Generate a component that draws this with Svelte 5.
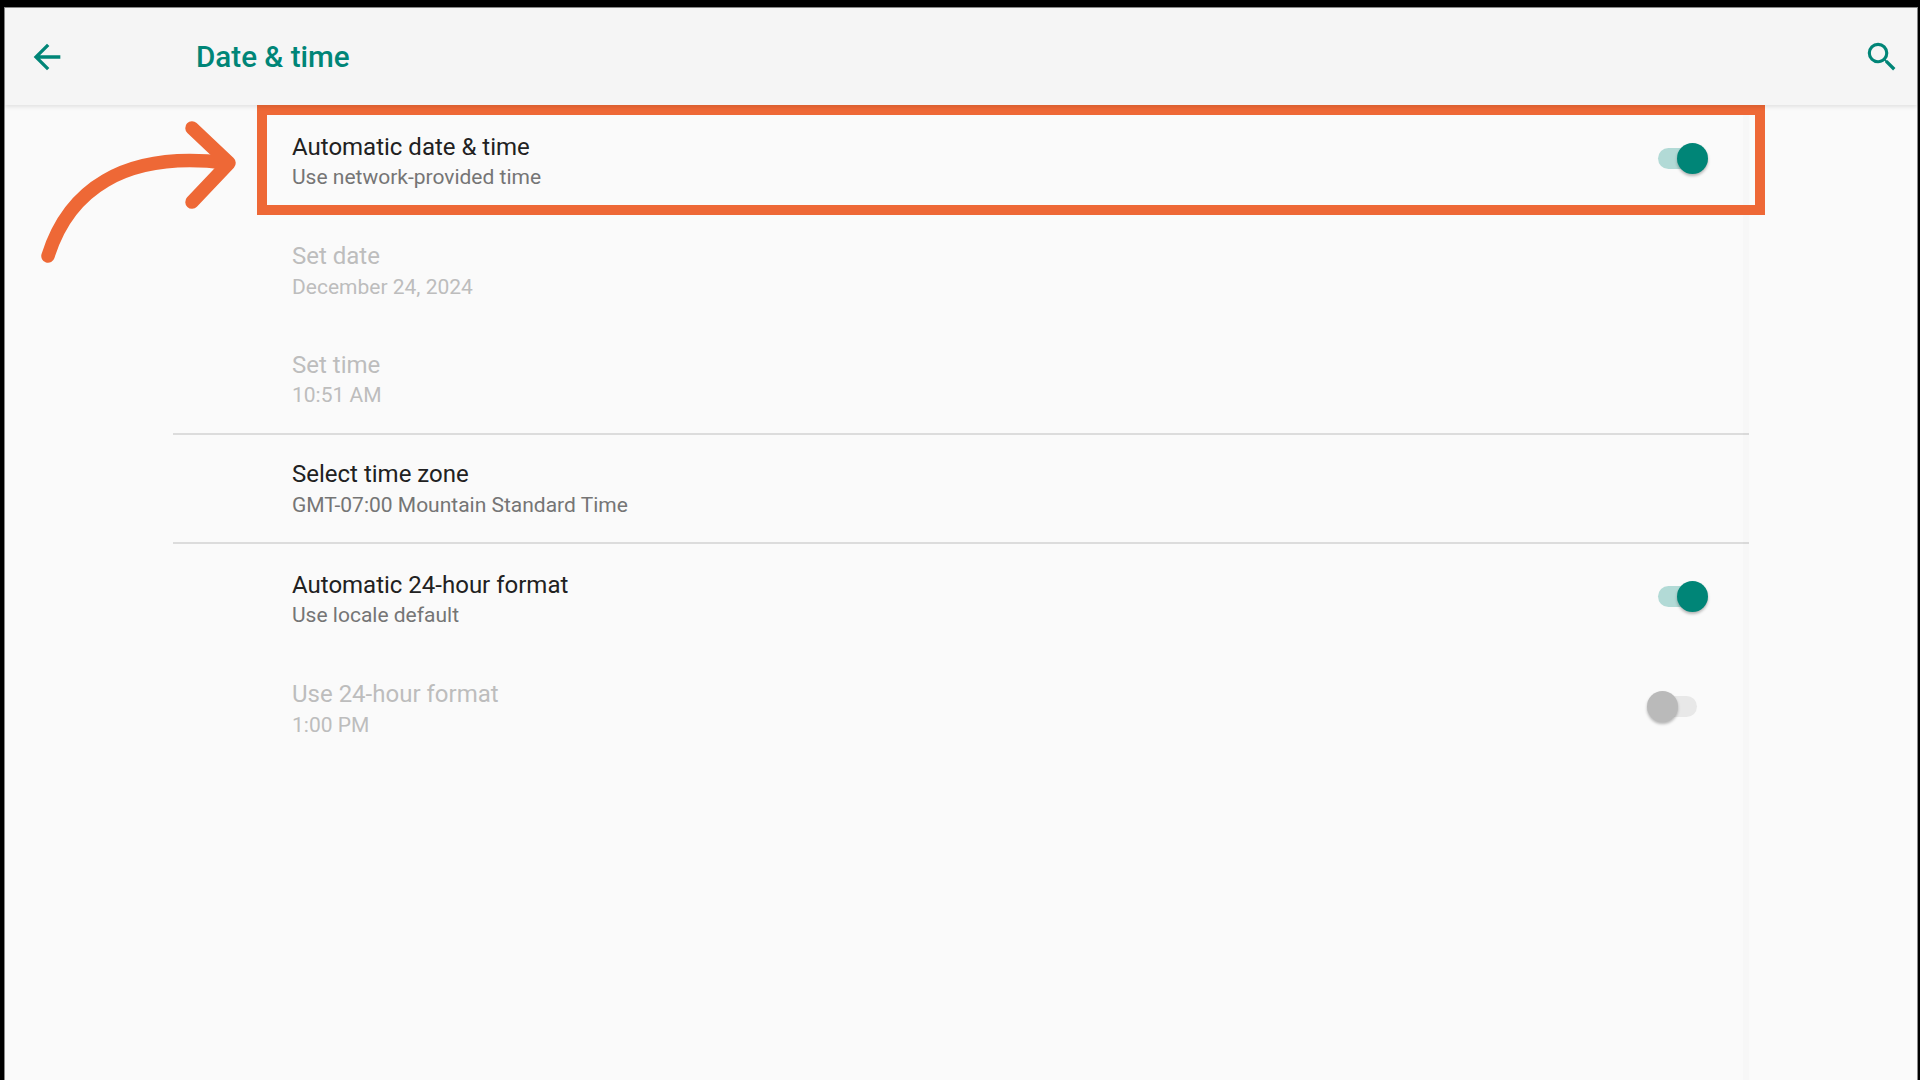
<script lang="ts">
	// Android "Date & time" settings page, with the tutorial arrow + highlight on top.
	interface Row {
		title: string;
		summary: string;
		disabled?: boolean;
		toggle?: 'on' | 'off';
		divider?: boolean;
	}

	const rows: Row[] = [
		{ title: 'Automatic date & time', summary: 'Use network-provided time', toggle: 'on' },
		{ title: 'Set date', summary: 'December 24, 2024', disabled: true },
		{ title: 'Set time', summary: '10:51 AM', disabled: true, divider: true },
		{ title: 'Select time zone', summary: 'GMT-07:00 Mountain Standard Time', divider: true },
		{ title: 'Automatic 24-hour format', summary: 'Use locale default', toggle: 'on' },
		{ title: 'Use 24-hour format', summary: '1:00 PM', disabled: true, toggle: 'off' }
	];
</script>

<div class="frame">
	<main class="screen">
		<header class="appbar">
			<svg class="icon" viewBox="0 0 24 24" width="40" height="40" aria-hidden="true">
				<path d="M20 11H7.83l5.59-5.59L12 4l-8 8 8 8 1.41-1.41L7.83 13H20v-2z" />
			</svg>
			<h1 class="appbar__title">Date &amp; time</h1>
			<svg class="icon" viewBox="0 0 24 24" width="38" height="38" aria-hidden="true">
				<path d="M15.5 14h-.79l-.28-.27A6.47 6.47 0 0 0 16 9.5 6.5 6.5 0 1 0 9.5 16c1.61 0 3.09-.59 4.23-1.57l.27.28v.79l5 4.99L20.49 19l-4.99-5zm-6 0C7.01 14 5 11.99 5 9.5S7.01 5 9.5 5 14 7.01 14 9.5 11.99 14 9.5 14z" />
			</svg>
		</header>

		<ul class="list">
			{#each rows as row (row.title)}
				<li class="row" class:row--disabled={row.disabled} class:row--divider={row.divider}>
					<div class="row__text">
						<span class="row__title">{row.title}</span>
						<span class="row__summary">{row.summary}</span>
					</div>
					{#if row.toggle}
						<span class="toggle toggle--{row.toggle}">
							<span class="toggle__track"></span>
							<span class="toggle__thumb"></span>
						</span>
					{/if}
				</li>
			{/each}
		</ul>
	</main>

	<div class="highlight"></div>
	<svg class="arrow" viewBox="0 0 260 280" width="260" height="280" aria-hidden="true">
		<path d="M48 256C68 192 122 150 226 163" />
		<path d="M192 128L229 163L192 202" />
	</svg>
</div>

<style>
	:global(body) {
		background: #000;
	}

	.frame {
		position: relative;
		width: 1920px;
		height: 1080px;
		box-sizing: border-box;
		padding: 8px 3px 0 5px;
		background: #000;
		overflow: hidden;
		font-family: Roboto, sans-serif;
	}

	.screen {
		display: flex;
		flex-direction: column;
		height: 100%;
		background: #fafafa;
		box-shadow: 0 0 0 1px #8a8a8a;
	}

	.appbar {
		display: flex;
		flex: none;
		align-items: center;
		height: 97px;
		padding: 0 16px 0 22px;
		background: #f5f5f5;
		box-shadow: 0 2px 4px rgba(0, 0, 0, 0.1);
		position: relative;
		z-index: 1;
	}

	.icon {
		fill: #008577;
		flex: none;
	}

	.appbar__title {
		margin: 0 0 0 129px;
		font-size: 29.6px;
		font-weight: 500;
		color: #008577;
		flex: 1;
	}

	.list {
		position: relative;
		flex: 1;
		list-style: none;
		margin: 0 0 0 168px;
		padding: 1px 0 0;
		width: 1576px;
	}

	/* faint scroll indicator column at the list's right edge */
	.list::after {
		content: '';
		position: absolute;
		top: 0;
		right: 0;
		bottom: 0;
		width: 6px;
		background: rgba(0, 0, 0, 0.01);
	}

	.row {
		display: flex;
		align-items: center;
		justify-content: space-between;
		box-sizing: border-box;
		height: 109.6px;
		padding: 0 41px 0 119px;
	}

	.row--divider {
		border-bottom: 2px solid #dcdcdc;
	}

	.row__text {
		display: flex;
		flex-direction: column;
		gap: 3.6px;
		padding-top: 1px;
	}

	.row__title {
		font-size: 24px;
		line-height: 28px;
		color: #212121;
	}

	.row__summary {
		font-size: 21px;
		line-height: 26px;
		color: #757575;
	}

	.row--disabled .row__title,
	.row--disabled .row__summary {
		color: #bdbdbd;
	}

	.toggle {
		position: relative;
		display: block;
		flex: none;
		width: 61px;
		height: 31px;
		margin-bottom: 5px;
	}

	.toggle__track {
		position: absolute;
		top: 5px;
		width: 41px;
		height: 21px;
		border-radius: 11px;
	}

	.toggle__thumb {
		position: absolute;
		top: 0;
		width: 31px;
		height: 31px;
		border-radius: 50%;
		box-shadow: 0 2px 3px rgba(0, 0, 0, 0.28);
	}

	.toggle--on .toggle__track {
		left: 11px;
		background: #b2dad6;
	}

	.toggle--on .toggle__thumb {
		right: 0;
		background: #008577;
	}

	.toggle--off .toggle__track {
		left: 9px;
		background: #e8e8e8;
	}

	.toggle--off .toggle__thumb {
		left: 0;
		background: #bababa;
	}

	/* tutorial overlay, drawn over the screenshot */
	.highlight {
		position: absolute;
		left: 257px;
		top: 105px;
		width: 1508px;
		height: 110px;
		box-sizing: border-box;
		border: 10px solid #ee6836;
	}

	.arrow {
		position: absolute;
		left: 0;
		top: 0;
		fill: none;
		stroke: #ee6836;
		stroke-width: 13.5;
		stroke-linecap: round;
		stroke-linejoin: round;
	}
</style>
